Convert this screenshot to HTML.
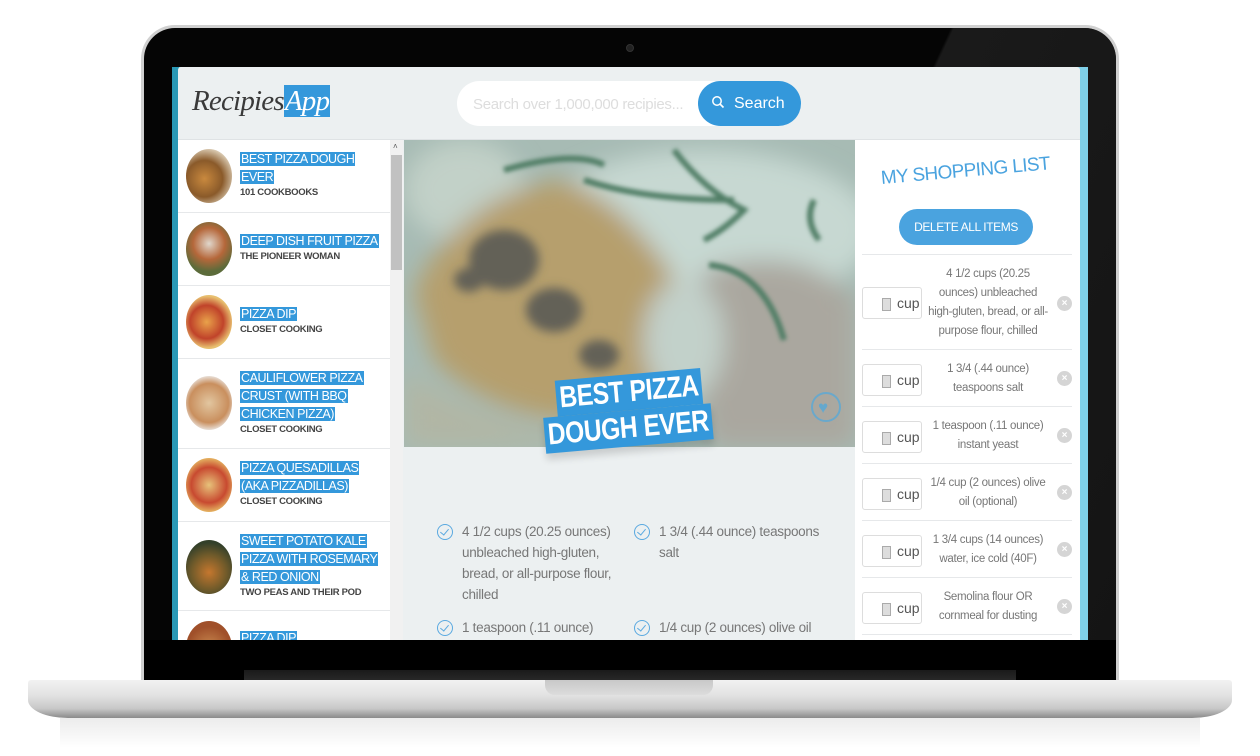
<!DOCTYPE html>
<html><head><meta charset="utf-8"><style>
*{margin:0;padding:0;box-sizing:border-box}
body{width:1260px;height:756px;background:#fff;position:relative;overflow:hidden;font-family:"Liberation Sans",sans-serif}
.abs{position:absolute}
.hl{background:#3498db;color:#fff;font-size:12.5px;line-height:18px;padding:0 1px;letter-spacing:-0.45px;box-decoration-break:clone;-webkit-box-decoration-break:clone}
.item{position:absolute;left:178px;width:212px;border-bottom:1px solid #e6e8ea;background:#fff}
.th{position:absolute;left:8px;width:46px;height:54px;border-radius:50%}
.tx{position:absolute;left:62px;width:150px;white-space:nowrap}
.src{font-size:9.5px;color:#444;font-weight:bold;letter-spacing:-0.3px;line-height:14px;display:block}
.row{position:absolute;left:862px;width:210px;height:57px;border-top:1px solid #e6e8ea}
.inp{position:absolute;left:0;top:14px;width:60px;height:32px;border:1px solid #ddd;border-radius:3px;background:#fff;font-size:14px;color:#555}
.inp .sp{position:absolute;left:19px;top:10px;width:9px;height:13px;background:#ddd;border:1px solid #aaa}
.inp span.c{position:absolute;left:34px;top:7px}
.desc{position:absolute;left:64px;width:124px;text-align:center;font-size:11.5px;color:#777;line-height:19px;letter-spacing:-0.3px}
.x{position:absolute;left:195px;width:15px;height:15px;border-radius:50%;background:#d5d5d5;color:#fff;font-size:10px;text-align:center;line-height:15px;font-weight:bold}
.ing{position:absolute;font-size:13.5px;color:#777;line-height:21px;letter-spacing:-0.3px}
.chk{position:absolute;width:16px;height:16px;border:1.5px solid #5aa9e0;border-radius:50%}
.chk:after{content:"";position:absolute;left:4px;top:2px;width:4px;height:7px;border:solid #5aa9e0;border-width:0 1.5px 1.5px 0;transform:rotate(40deg)}
</style></head><body>
<div class="abs" style="left:141px;top:25px;width:978px;height:662px;background:#d0d0d0;border-radius:34px 34px 0 0"></div>
<div class="abs" style="left:144px;top:28px;width:972px;height:656px;background:#050505;border-radius:31px 31px 0 0"></div>
<div class="abs" style="left:750px;top:28px;width:366px;height:650px;background:linear-gradient(115deg,rgba(255,255,255,0) 0%,rgba(255,255,255,0) 30%,rgba(40,40,40,.6) 30.5%,rgba(30,30,30,.6) 100%);border-radius:0 31px 0 0"></div>
<div class="abs" style="left:626px;top:44px;width:8px;height:8px;border-radius:50%;background:#222;border:1px solid #333"></div>
<div class="abs" style="left:172px;top:67px;width:916px;height:573px;background:#7fd0e8"></div>
<div class="abs" style="left:172px;top:67px;width:7px;height:573px;background:#2a98b5"></div>
<div class="abs" style="left:178px;top:67px;width:902px;height:573px;background:#ecf0f1;border-radius:3px 3px 0 0;overflow:hidden"></div>
<div class="abs" style="left:192px;top:85px;font-family:'Liberation Serif',serif;font-style:italic;font-size:29px;color:#3a3a3a;letter-spacing:-0.8px">Recipies<span style="background:#3498db;color:#fff;padding:0 1px">App</span></div>
<div class="abs" style="left:457px;top:81px;width:320px;height:45px;background:#fff;border-radius:23px"></div>
<div class="abs" style="left:473px;top:96px;font-size:15px;color:#ddd;letter-spacing:-0.3px">Search over 1,000,000 recipies...</div>
<div class="abs" style="left:698px;top:81px;width:103px;height:45px;background:#3498db;border-radius:23px;color:#fff;font-size:16px;line-height:45px;padding-left:36px">Search</div>
<svg class="abs" style="left:711px;top:95px" width="14" height="14" viewBox="0 0 14 14"><circle cx="6" cy="6" r="4.2" fill="none" stroke="#fff" stroke-width="1.5"/><path d="M9 9l3.5 3.5" stroke="#fff" stroke-width="1.6"/></svg>
<div class="abs" style="left:178px;top:139px;width:902px;height:1px;background:#dfe3e5"></div>
<div class="abs" style="left:178px;top:140px;width:225px;height:500px;background:#fff"></div>
<div class="abs" style="left:390px;top:140px;width:13px;height:500px;background:#f1f1f1"></div>
<div class="abs" style="left:391px;top:155px;width:11px;height:115px;background:#c1c1c1"></div>
<div class="abs" style="left:393px;top:142px;font-size:8px;color:#555">˄</div>

<div class="item" style="top:140px;height:73px"><div class="th" style="top:9px;background:radial-gradient(circle at 40% 55%,#c9893e,#8a5a2a 45%,#d9c9b0 75%)"></div><div class="tx" style="top:10px"><span class="hl">BEST PIZZA DOUGH<br>EVER</span><span class="src">101 COOKBOOKS</span></div></div>
<div class="item" style="top:213px;height:73px"><div class="th" style="top:9px;background:radial-gradient(circle at 50% 40%,#e0d7cc,#b5673a 40%,#5c6b3a 70%)"></div><div class="tx" style="top:19px"><span class="hl">DEEP DISH FRUIT PIZZA</span><span class="src">THE PIONEER WOMAN</span></div></div>
<div class="item" style="top:286px;height:73px"><div class="th" style="top:9px;background:radial-gradient(circle at 45% 50%,#e9a24a,#c0432a 45%,#e8c070 70%)"></div><div class="tx" style="top:19px"><span class="hl">PIZZA DIP</span><span class="src">CLOSET COOKING</span></div></div>
<div class="item" style="top:359px;height:90px"><div class="th" style="top:17px;background:radial-gradient(circle,#e2c6a0,#c98f5e 55%,#eee 80%)"></div><div class="tx" style="top:10px"><span class="hl">CAULIFLOWER PIZZA<br>CRUST (WITH BBQ<br>CHICKEN PIZZA)</span><span class="src">CLOSET COOKING</span></div></div>
<div class="item" style="top:449px;height:73px"><div class="th" style="top:9px;background:radial-gradient(circle,#e7c27a,#c84a30 50%,#e4b060 75%)"></div><div class="tx" style="top:10px"><span class="hl">PIZZA QUESADILLAS<br>(AKA PIZZADILLAS)</span><span class="src">CLOSET COOKING</span></div></div>
<div class="item" style="top:522px;height:89px"><div class="th" style="top:18px;background:radial-gradient(circle at 50% 60%,#c5772e,#6f5a2a 45%,#33402a 75%)"></div><div class="tx" style="top:10px"><span class="hl">SWEET POTATO KALE<br>PIZZA WITH ROSEMARY<br>&amp; RED ONION</span><span class="src">TWO PEAS AND THEIR POD</span></div></div>
<div class="item" style="top:611px;height:40px"><div class="th" style="top:10px;background:radial-gradient(circle,#c98a50,#a0502a 60%)"></div><div class="tx" style="top:18px"><span class="hl">PIZZA DIP</span></div></div>

<div class="abs" style="left:404px;top:140px;width:451px;height:307px;overflow:hidden;background:#a9b6a6">
<svg width="451" height="307" viewBox="0 0 451 307"><defs><filter id="b" x="-20%" y="-20%" width="140%" height="140%"><feGaussianBlur stdDeviation="12"/></filter><filter id="b2" x="-30%" y="-30%" width="160%" height="160%"><feGaussianBlur stdDeviation="5"/></filter><filter id="b3"><feGaussianBlur stdDeviation="2"/></filter></defs>
<rect width="451" height="307" fill="#b4bfae"/>
<g filter="url(#b)">
<ellipse cx="300" cy="90" rx="170" ry="80" fill="#dfe6d6"/>
<ellipse cx="60" cy="50" rx="60" ry="50" fill="#d8dcc8"/>
<path d="M10 150 Q60 50 160 40 Q230 60 290 170 Q300 260 220 280 Q100 290 30 220 Z" fill="#c89a50"/>
<path d="M300 130 Q400 100 451 160 L451 307 L310 307 Q280 220 300 130Z" fill="#b9a592"/>
<path d="M0 230 Q100 300 260 307 L0 307Z" fill="#c2b99a"/>
<ellipse cx="280" cy="200" rx="40" ry="60" fill="#d9dccb"/>
</g>
<g filter="url(#b2)" fill="#5a4632">
<ellipse cx="100" cy="120" rx="35" ry="30"/><ellipse cx="150" cy="170" rx="28" ry="22"/><ellipse cx="195" cy="215" rx="20" ry="15"/><ellipse cx="65" cy="140" rx="15" ry="12"/>
</g>
<g filter="url(#b3)" fill="none" stroke="#3f6d45" stroke-width="6">
<path d="M100 30 Q170 10 200 25"/><path d="M180 40 Q240 60 330 60"/><path d="M270 10 Q300 50 340 70 Q320 90 300 100"/><path d="M305 125 Q360 130 380 200"/><path d="M410 60 Q400 80 415 100"/>
</g>
<rect width="451" height="307" fill="#7fb0c8" opacity=".25"/>
</svg>
<div class="abs" style="left:407px;top:252px;width:30px;height:30px;border:2px solid #5aa9d6;border-radius:50%;opacity:.8"></div>
<div class="abs" style="left:414px;top:258px;color:#5aa9d6;font-size:17px;opacity:.85">♥</div>
</div>
<div class="abs" style="left:404px;top:447px;width:451px;height:193px;background:#ecf0f1"></div>
<div class="abs" style="left:540px;top:382px;transform:rotate(-5deg) scaleX(0.82);transform-origin:left top;font-size:30px;font-weight:bold;color:#fff;line-height:36px;letter-spacing:-0.5px">
<div style="background:#3498db;display:inline-block;padding:0 4px;margin-left:18px">BEST PIZZA</div><br><div style="background:#3498db;display:inline-block;padding:0 4px;box-shadow:0 6px 8px rgba(0,0,0,.15)">DOUGH EVER</div></div>
<div class="chk" style="left:437px;top:524px"></div>
<div class="ing" style="left:462px;top:521px;width:160px">4 1/2 cups (20.25 ounces) unbleached high-gluten, bread, or all-purpose flour, chilled</div>
<div class="chk" style="left:634px;top:524px"></div>
<div class="ing" style="left:659px;top:521px;width:170px">1 3/4 (.44 ounce) teaspoons salt</div>
<div class="chk" style="left:437px;top:620px"></div>
<div class="ing" style="left:462px;top:617px">1 teaspoon (.11 ounce)</div>
<div class="chk" style="left:634px;top:620px"></div>
<div class="ing" style="left:659px;top:617px">1/4 cup (2 ounces) olive oil</div>
<div class="abs" style="left:855px;top:140px;width:225px;height:500px;background:#fff"></div>
<div class="abs" style="left:882px;top:168px;transform:rotate(-5deg);transform-origin:left bottom;font-size:19px;color:#4aa3df;letter-spacing:-0.6px">MY SHOPPING LIST</div>
<div class="abs" style="left:899px;top:209px;width:134px;height:36px;background:#4aa3df;border-radius:18px;color:#fff;font-size:12px;text-align:center;line-height:36px;letter-spacing:-0.4px">DELETE ALL ITEMS</div>
<div class="row" style="top:254px;height:95px"><div class="inp" style="top:32px"><div class="sp"></div><span class="c">cup</span></div><div class="desc" style="top:10px">4 1/2 cups (20.25 ounces) unbleached high-gluten, bread, or all-purpose flour, chilled</div><div class="x" style="top:41px">×</div></div>
<div class="row" style="top:349px"><div class="inp"><div class="sp"></div><span class="c">cup</span></div><div class="desc" style="top:10px">1 3/4 (.44 ounce) teaspoons salt</div><div class="x" style="top:21px">×</div></div>
<div class="row" style="top:406px"><div class="inp"><div class="sp"></div><span class="c">cup</span></div><div class="desc" style="top:10px">1 teaspoon (.11 ounce) instant yeast</div><div class="x" style="top:21px">×</div></div>
<div class="row" style="top:463px"><div class="inp"><div class="sp"></div><span class="c">cup</span></div><div class="desc" style="top:10px">1/4 cup (2 ounces) olive oil (optional)</div><div class="x" style="top:21px">×</div></div>
<div class="row" style="top:520px"><div class="inp"><div class="sp"></div><span class="c">cup</span></div><div class="desc" style="top:10px">1 3/4 cups (14 ounces) water, ice cold (40F)</div><div class="x" style="top:21px">×</div></div>
<div class="row" style="top:577px"><div class="inp"><div class="sp"></div><span class="c">cup</span></div><div class="desc" style="top:10px">Semolina flour OR cornmeal for dusting</div><div class="x" style="top:21px">×</div></div>
<div class="row" style="top:634px;height:6px"></div>
<div class="abs" style="left:144px;top:640px;width:972px;height:44px;background:#000"></div>
<div class="abs" style="left:244px;top:670px;width:772px;height:12px;background:linear-gradient(#1a1a1a,#2a2a2a)"></div>
<div class="abs" style="left:28px;top:680px;width:1204px;height:38px;background:linear-gradient(#f2f2f2 0%,#e2e2e2 40%,#c8c8c8 75%,#8a8a8a 100%);border-radius:3px 3px 40px 40px/3px 3px 18px 18px"></div>
<div class="abs" style="left:545px;top:680px;width:168px;height:15px;background:linear-gradient(#c8c8c8,#dcdcdc);border-radius:0 0 10px 10px"></div>
<div class="abs" style="left:60px;top:718px;width:1140px;height:30px;background:linear-gradient(rgba(200,200,200,.35),rgba(255,255,255,0))"></div>
</body></html>
